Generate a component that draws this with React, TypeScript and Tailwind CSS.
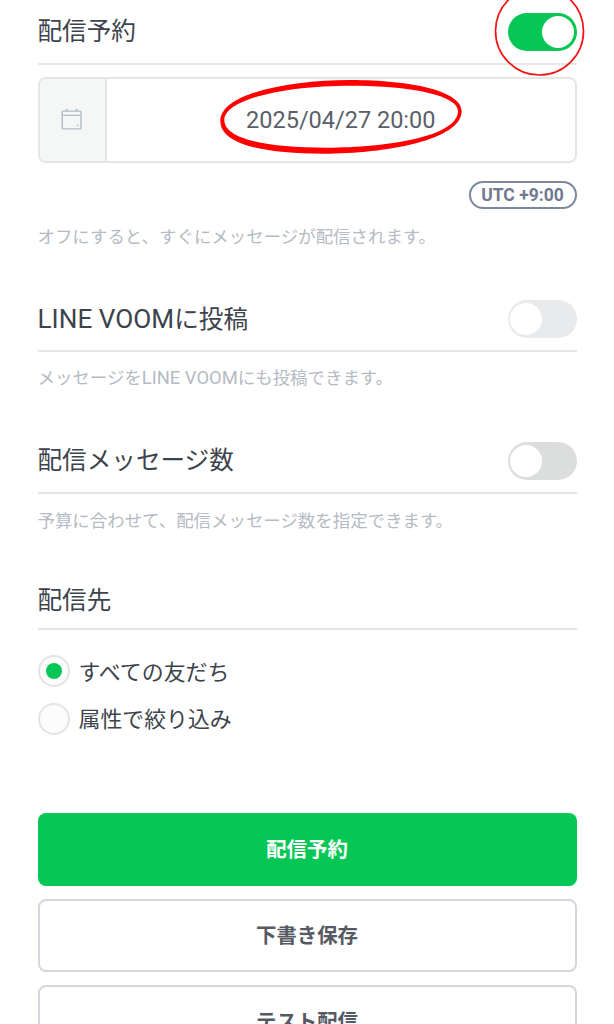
import { useState } from "react";
import type { ReactNode } from "react";
import clsx from "clsx";

const CalendarIcon = () => (
  <svg width="22" height="24" viewBox="0 0 22 24" fill="none" stroke="#b3bbc6">
    <rect x="1.2" y="3.1" width="18.8" height="17.8" rx="1" strokeWidth="1.4" />
    <path d="M1.2 7.4h18.8" strokeWidth="1.3" />
    <path d="M5.8 0.8v2.4M15.6 0.8v2.4" strokeWidth="1.8" />
    <path d="M15.8 17.4h1.8" strokeWidth="1.4" />
  </svg>
);

type ToggleProps = {
  checked: boolean;
  onChange: () => void;
  offClass?: string;
};

const Toggle = ({ checked, onChange, offClass }: ToggleProps) => (
  <button
    role="switch"
    aria-checked={checked}
    onClick={onChange}
    className={clsx(
      "flex h-[38px] w-[69px] items-center rounded-full px-[2.5px]",
      checked ? "justify-end bg-[#06c755]" : offClass
    )}
  >
    <span className="size-8 rounded-full bg-white" />
  </button>
);

type HeaderProps = {
  title: ReactNode;
  className: string;
  children?: ReactNode;
};

const SectionHeader = ({ title, className, children }: HeaderProps) => (
  <div className={clsx("flex items-center justify-between", className)}>
    <h2 className="pt-px text-[24.6px] leading-9 text-[#3d434c]">{title}</h2>
    {children}
  </div>
);

type RadioProps = {
  label: string;
  checked: boolean;
  onSelect: () => void;
};

const Radio = ({ label, checked, onSelect }: RadioProps) => (
  <button
    role="radio"
    aria-checked={checked}
    onClick={onSelect}
    className="flex h-8 items-center gap-[9px]"
  >
    <span className="flex size-8 items-center justify-center rounded-full border-2 border-[#e3e5e5] bg-[#fcfcfc]">
      {checked && <span className="size-4 rounded-full bg-[#06c755]" />}
    </span>
    <span className="pt-[3px] text-[21.9px] leading-8 text-[#3d434c]">
      {label}
    </span>
  </button>
);

const App = () => {
  const [scheduled, setScheduled] = useState(true);
  const [voom, setVoom] = useState(false);
  const [limited, setLimited] = useState(false);
  const [target, setTarget] = useState("all");

  return (
    <div className="relative h-screen overflow-hidden bg-white px-[37.5px] font-['Roboto','Noto_Sans_CJK_JP',sans-serif]">
      {/* Schedule */}
      <SectionHeader
        title="配信予約"
        className="h-[65px] border-b-2 border-[#e6e7e8]"
      >
        <Toggle checked={scheduled} onChange={() => setScheduled(!scheduled)} />
      </SectionHeader>

      <div className="mt-3 flex h-[86px] overflow-hidden rounded-lg border-2 border-[#e3e5e6]">
        <div className="flex w-[67.5px] items-center justify-center border-r-2 border-[#e3e5e6] bg-[#f5f7f7]">
          <CalendarIcon />
        </div>
        <div className="flex flex-1 items-center justify-center pt-0.5 text-[23.5px] text-[#5a606a]">
          2025/04/27 20:00
        </div>
      </div>

      <div className="mt-[18px] flex justify-end">
        <span className="flex h-7 w-[108px] items-center justify-center rounded-full border-2 border-[#7d879f] text-[17.5px] font-bold text-[#6f7990]">
          UTC +9:00
        </span>
      </div>
      <p className="mt-[14px] text-[17.45px] leading-7 text-[#b5bbc4]">
        オフにすると、すぐにメッセージが配信されます。
      </p>

      {/* LINE VOOM */}
      <SectionHeader
        title={
          <>
            <span className="text-[26.2px]">LINE VOOM</span>に投稿
          </>
        }
        className="mt-[35px] h-[66px] border-b-2 border-[#e6e7eb] pt-0.5"
      >
        <Toggle
          checked={voom}
          onChange={() => setVoom(!voom)}
          offClass="bg-[#e9eaec]"
        />
      </SectionHeader>
      <p className="mt-[12px] text-[17.45px] leading-7 text-[#b5bbc4]">
        メッセージを<span className="text-[18.4px]">LINE VOOM</span>
        にも投稿できます。
      </p>

      {/* Message count */}
      <SectionHeader
        title="配信メッセージ数"
        className="mt-[37px] h-[65px] border-b-2 border-[#e2e5ea]"
      >
        <Toggle
          checked={limited}
          onChange={() => setLimited(!limited)}
          offClass="bg-[#dcdedd]"
        />
      </SectionHeader>
      <p className="mt-[13px] text-[17.45px] leading-7 text-[#b5bbc4]">
        予算に合わせて、配信メッセージ数を指定できます。
      </p>

      {/* Recipients */}
      <SectionHeader
        title="配信先"
        className="mt-[33px] h-[62px] border-b-2 border-[#e2e5e9] pt-1"
      />
      <div role="radiogroup" className="mt-[25px] flex flex-col gap-[15.5px]">
        <Radio
          label="すべての友だち"
          checked={target === "all"}
          onSelect={() => setTarget("all")}
        />
        <Radio
          label="属性で絞り込み"
          checked={target === "filtered"}
          onSelect={() => setTarget("filtered")}
        />
      </div>

      {/* Actions */}
      <div className="mt-[78.5px] flex flex-col gap-[13px] text-[20.4px] font-bold text-[#555a62]">
        <button className="h-[73px] rounded-lg bg-[#06c755] pt-0.5 text-white">
          配信予約
        </button>
        <button className="h-[73px] rounded-lg border-2 border-[#d3d7dc] pt-0.5">
          下書き保存
        </button>
        <button className="h-[73px] rounded-lg border-2 border-[#d3d7dc] pt-0.5">
          テスト配信
        </button>
      </div>

      {/* Hand-drawn marks over the toggle and the date */}
      <svg
        className="pointer-events-none absolute top-0 left-0"
        width="614"
        height="170"
        viewBox="0 0 614 170"
      >
        <circle
          cx="539.5"
          cy="31"
          r="44"
          fill="none"
          stroke="#f01414"
          strokeWidth="1.7"
        />
        <path
          transform="translate(200 65) scale(.33333)"
          fill="#fe0000"
          fillRule="evenodd"
          d="M61 168C61 85 270 45 450 45C640 45 785 80 785 138C785 225 560 266 370 266C180 266 61 235 61 168ZM73 165C73 220 190 248 380 248C560 248 774 215 774 138C774 92 640 62 450 62C265 62 73 100 73 165Z"
        />
      </svg>
    </div>
  );
};

export default App;
